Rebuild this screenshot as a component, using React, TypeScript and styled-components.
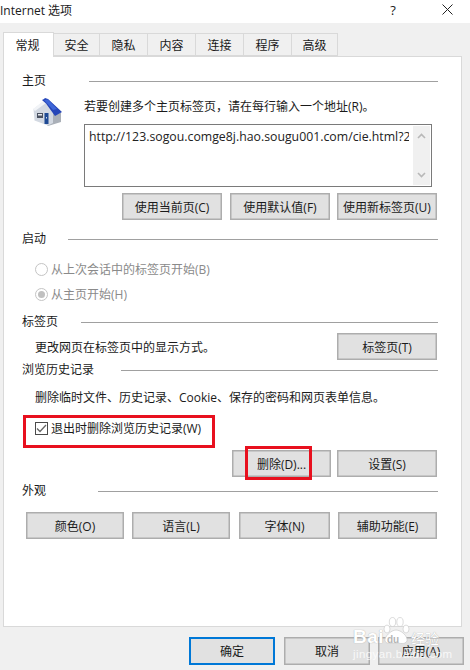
import React from "react";
import styled, { createGlobalStyle } from "styled-components";

const Global = createGlobalStyle`
  html, body { margin: 0; padding: 0; background: #f0f0f0; }
  body { font-family: "Open Sans", "Noto Sans CJK SC", sans-serif; font-size: 12px; color: #1a1a1a; }
`;
const Dialog = styled.div`
  position: relative; width: 470px; height: 670px; overflow: hidden; background: #f0f0f0;
  display: flex; flex-direction: column;
`;
const TitleBar = styled.div`
  box-sizing: border-box; height: 23px; background: #fff; display: flex; align-items: center; padding-bottom: 4px;
  font-size: 12px; flex: none;
`;
const Title = styled.div` flex: 1; `;
const TitleButton = styled.div<{ $w: number }>`
  width: ${(p) => p.$w}px; display: flex; justify-content: center; align-items: center; font-size: 13px;
`;
const Tabs = styled.div` display: flex; height: 24px; margin: 9px 0 0 3px; align-items: flex-end; flex: none; position: relative; z-index: 1; `;
const Tab = styled.div<{ $active?: boolean; $w: number }>`
  box-sizing: border-box; width: ${(p) => p.$w}px; height: ${(p) => (p.$active ? 25 : 23)}px;
  margin-bottom: ${(p) => (p.$active ? -1 : 0)}px;
  background: ${(p) => (p.$active ? "#fff" : "#f0f0f0")};
  border: 1px solid #d9d9d9; border-bottom: ${(p) => (p.$active ? "none" : "1px solid #d9d9d9")};
  border-left: ${(p) => (p.$active ? "1px solid #d9d9d9" : "none")};
  display: flex; align-items: center; justify-content: center; font-size: 12px; padding-right: ${(p) => (p.$active ? 2 : 0)}px;
`;
const Panel = styled.div`
  box-sizing: border-box; width: 459px; height: 571px; margin-left: 3px; background: #fff;
  border: 1px solid #d9d9d9; padding: 16px 23px 0 18px; flex: none;
`;
const Header = styled.div<{ $label: number; $mt?: number }>`
  display: grid; grid-template-columns: ${(p) => p.$label}px 1fr; align-items: center; height: 16px;
  margin-top: ${(p) => p.$mt ?? 0}px; line-height: 16px;
`;
const Label = styled.span` padding-top: 2px; `;
const Rule = styled.div` height: 1px; background: #a0a0a0; `;
const HomeRow = styled.div` display: grid; grid-template-columns: 62px 1fr; margin-top: 10px; `;
const HomeIconBox = styled.div` padding-left: 10px; margin-top: -1px; `;
const HomeColumn = styled.div` display: flex; flex-direction: column; `;
const Line = styled.div<{ $mt?: number; $ml?: number; $disabled?: boolean }>`
  height: 16px; line-height: 16px; margin-top: ${(p) => p.$mt ?? 0}px; margin-left: ${(p) => p.$ml ?? 0}px;
  color: ${(p) => (p.$disabled ? "#8a8a8a" : "inherit")}; display: flex; align-items: center; gap: 3px; white-space: nowrap;
`;
const UrlBox = styled.div`
  box-sizing: border-box; width: 348px; height: 63px; margin-top: 9px; border: 1px solid #7a7a7a;
  display: flex; padding: 1px 1px 1px 4px; background: #fff;
`;
const UrlText = styled.div`
  flex: 1; overflow: hidden; white-space: nowrap; font-family: "Open Sans", sans-serif; font-size: 12.3px; line-height: 16px; padding-top: 3px; margin-right: 4px; color: #222;
`;
const ScrollBar = styled.div`
  width: 17px; background: #f0f0f0; display: flex; flex-direction: column; justify-content: space-between; align-items: center; padding: 7px 0; box-sizing: border-box;
`;
const Buttons = styled.div<{ $mt?: number; $pl?: number }>`
  display: flex; margin-top: ${(p) => p.$mt ?? 0}px; padding-left: ${(p) => p.$pl ?? 0}px;
`;
const Btn = styled.div<{ $w: number; $ml?: number; $mr?: number }>`
  box-sizing: border-box; width: ${(p) => p.$w}px; height: 27px; margin-left: ${(p) => p.$ml ?? 0}px; margin-right: ${(p) => p.$mr ?? 0}px; flex: none;
  background: #e1e1e1; border: 1px solid #adadad; box-shadow: inset 0 0 0 0.5px #adadad;
  display: flex; align-items: center; justify-content: center; font-size: 12px; white-space: nowrap;
`;
const TabsRow = styled.div`
  display: flex; justify-content: space-between; align-items: center; margin-top: 3px; height: 27px; padding-left: 13px;
`;
const FooterRow = styled.div` display: flex; height: 28px; margin: 10px 0 0 189px; flex: none; `;
const FooterBtn = styled(Btn)<{ $primary?: boolean }>`
  height: 28px; ${(p) => (p.$primary ? "border: 2px solid #0078d7; box-shadow: none;" : "")}
`;
const Radio = styled.span<{ $on?: boolean }>`
  box-sizing: border-box; width: 13px; height: 13px; border-radius: 50%; border: 1px solid #c4c4c4; background: #fff; flex: none;
  display: flex; align-items: center; justify-content: center;
  &::after { content: ""; width: 7px; height: 7px; border-radius: 50%; background: ${(p) => (p.$on ? "#c0c0c0" : "transparent")}; }
`;
const Check = styled.span`
  box-sizing: border-box; width: 13px; height: 13px; border: 1px solid #4a4a4a; background: #fff; flex: none; display: flex; align-items: center; justify-content: center;
`;
const RedBox = styled.div<{ $x: number; $y: number; $w: number; $h: number }>`
  position: absolute; box-sizing: border-box; left: ${(p) => p.$x}px; top: ${(p) => p.$y}px; width: ${(p) => p.$w}px; height: ${(p) => p.$h}px;
  border: 3px solid #e8101e; pointer-events: none;
`;
const Watermark = styled.div`
  position: absolute; left: 352px; top: 612px; width: 118px; height: 56px; pointer-events: none;
`;
const WmBai = styled.div`
  position: absolute; left: 1px; top: 14px; font: bold 19px/22px "Liberation Sans", sans-serif; letter-spacing: 0.5px;
  color: #fff; text-shadow: 0 0 1px #999;
`;
const WmPaw = styled.svg` position: absolute; left: 30px; top: 4px; `;
const WmDu = styled.span`
  position: absolute; left: 35px; top: 22px; font: bold 10px/12px "Liberation Sans", sans-serif; color: #b5b5b5;
`;
const WmJy = styled.span`
  position: absolute; left: 59px; top: 17px; font: 14px/18px "Noto Sans CJK SC", sans-serif; color: #fff; text-shadow: 0 0 1px #999;
`;
const WmUrl = styled.div`
  position: absolute; left: 1px; top: 35px; font: 11.5px/14px "Liberation Sans", sans-serif; letter-spacing: 0.4px; color: rgba(255,255,255,0.8); white-space: nowrap;
`;

const HouseIcon = () => (
  <svg width="30" height="28" viewBox="7 6 30 28">
    <path d="M27 18 L36 21 V30 L23 34 L20 31 Z" fill="#aab0b8" />
    <path d="M8.5 17 L19 9 L28 19 V31 L23 33.5 L9.5 28.5 Z" fill="#d3d9e2" />
    <path d="M8 17 L19 8.5 L21 11 L10 19 Z" fill="#f2f4f7" />
    <path d="M17 8 L19 7 L20 6 L23 7 L37 20 L30 24 L21 11.5 Z" fill="#2646b8" />
    <path d="M19 8 L23 7.5 L32 17 L28 18 Z" fill="#3e66d8" />
    <rect x="12" y="21" width="6" height="5" fill="#4a5160" />
    <rect x="13" y="22" width="4" height="1.5" fill="#e8ebef" />
    <rect x="19.5" y="21" width="4" height="11" fill="#1f4a94" />
    <rect x="21" y="25" width="1" height="1.5" fill="#cfd8e8" />
  </svg>
);

const Chevron = ({ up }: { up?: boolean }) => (
  <svg width="9" height="6" viewBox="0 0 9 6">
    <path d={up ? "M1 5 L4.5 1.5 L8 5" : "M1 1 L4.5 4.5 L8 1"} fill="none" stroke="#b8b8b8" strokeWidth="1.6" />
  </svg>
);

const tabs = [["常规", 51], ["安全", 46], ["隐私", 48], ["内容", 48], ["连接", 48], ["程序", 48], ["高级", 46]] as const;

export default function App() {
  return (
    <Dialog>
      <Global />
      <TitleBar>
        <Title>Internet 选项</Title>
        <TitleButton $w={14}>?</TitleButton>
        <TitleButton $w={25} />
        <TitleButton $w={45}>
          <svg width="11" height="11" viewBox="0 0 11 11"><path d="M0.5 0.5 L10.5 10.5 M10.5 0.5 L0.5 10.5" stroke="#222" strokeWidth="1" /></svg>
        </TitleButton>
      </TitleBar>
      <Tabs>
        {tabs.map(([t, w], i) => (
          <Tab key={t} $w={w} $active={i === 0}>{t}</Tab>
        ))}
      </Tabs>
      <Panel>
        <Header $label={67}><span>主页</span><Rule /></Header>
        <HomeRow>
          <HomeIconBox><HouseIcon /></HomeIconBox>
          <HomeColumn>
            <Line>若要创建多个主页标签页，请在每行输入一个地址(R)。</Line>
            <UrlBox>
              <UrlText>http://123.sogou.comge8j.hao.sougu001.com/cie.html?2</UrlText>
              <ScrollBar><Chevron up /><Chevron /></ScrollBar>
            </UrlBox>
          </HomeColumn>
        </HomeRow>
        <Buttons $mt={6} $pl={100}>
          <Btn $w={100}>使用当前页(C)</Btn>
          <Btn $w={100} $ml={8}>使用默认值(F)</Btn>
          <Btn $w={100} $ml={7}>使用新标签页(U)</Btn>
        </Buttons>
        <Header $label={46} $mt={11}><span>启动</span><Rule /></Header>
        <Line $mt={14} $ml={13} $disabled><Radio /><Label>从上次会话中的标签页开始(B)</Label></Line>
        <Line $mt={9} $ml={13} $disabled><Radio $on /><Label>从主页开始(H)</Label></Line>
        <Header $label={59} $mt={12}><span>标签页</span><Rule /></Header>
        <TabsRow>
          <span>更改网页在标签页中的显示方式。</span>
          <Btn $w={100} $mr={1}>标签页(T)</Btn>
        </TabsRow>
        <Header $label={99} $mt={2}><span>浏览历史记录</span><Rule /></Header>
        <Line $mt={11} $ml={13}><Label>删除临时文件、历史记录、Cookie、保存的密码和网页表单信息。</Label></Line>
        <Line $mt={15} $ml={13}>
          <Check>
            <svg width="11" height="11" viewBox="0 0 11 11"><path d="M1 5.5 L4 8.5 L10 2" fill="none" stroke="#666" strokeWidth="1.3" /></svg>
          </Check>
          <Label>退出时删除浏览历史记录(W)</Label>
        </Line>
        <Buttons $mt={14} $pl={210}>
          <Btn $w={99}>删除(D)...</Btn>
          <Btn $w={100} $ml={6}>设置(S)</Btn>
        </Buttons>
        <Header $label={76} $mt={6}><span>外观</span><Rule /></Header>
        <Buttons $mt={13} $pl={4}>
          <Btn $w={98}>颜色(O)</Btn>
          <Btn $w={98} $ml={8}>语言(L)</Btn>
          <Btn $w={91} $ml={9}>字体(N)</Btn>
          <Btn $w={99} $ml={8}>辅助功能(E)</Btn>
        </Buttons>
      </Panel>
      <FooterRow>
        <FooterBtn $w={86} $primary>确定</FooterBtn>
        <FooterBtn $w={86} $ml={9}>取消</FooterBtn>
        <FooterBtn $w={86} $ml={8}>应用(A)</FooterBtn>
      </FooterRow>
      <RedBox $x={23} $y={415} $w={192} $h={33} />
      <RedBox $x={245} $y={446} $w={67} $h={34} />
      <Watermark>
        <WmBai>Bai</WmBai>
        <WmPaw width="28" height="30" viewBox="0 0 28 30">
          <g fill="#fff" stroke="#c4c4c4" strokeWidth="0.6">
            <ellipse cx="5" cy="13" rx="3" ry="4" />
            <ellipse cx="10.5" cy="6" rx="3.2" ry="4.5" />
            <ellipse cx="18" cy="6" rx="3.2" ry="4.5" />
            <ellipse cx="24" cy="13" rx="3" ry="4" />
            <path d="M14 14 C9 14 2 21 3 25 C5 29 10 27 14 27 C18 27 23 29 25 25 C26 20 19 14 14 14 Z" />
          </g>
        </WmPaw>
        <WmDu>du</WmDu>
        <WmJy>经验</WmJy>
        <WmUrl>jingyan.baidu.com</WmUrl>
      </Watermark>
    </Dialog>
  );
}
